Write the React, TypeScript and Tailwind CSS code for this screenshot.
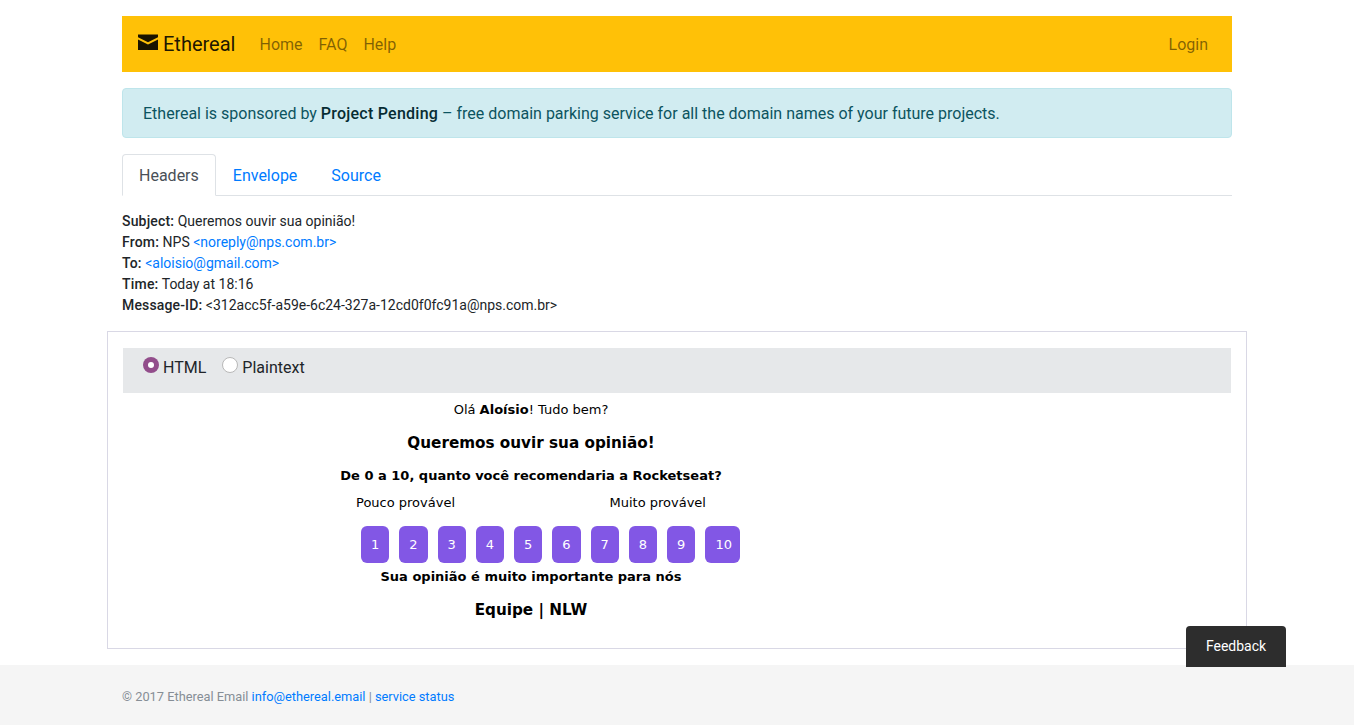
const navLinks = ['Home', 'FAQ', 'Help'];
const scores = ['1', '2', '3', '4', '5', '6', '7', '8', '9'];

function EnvelopeIcon() {
  return (
    <svg width="20" height="16" viewBox="0 0 20 16" className="mt-[-4px] mr-[5px]" fill="currentColor" aria-hidden="true">
      <path d="M0 .4v2.9l10 5 10-5V.4z" />
      <path d="M0 5.5V16h20V5.5l-10 5z" />
    </svg>
  );
}

function Navbar() {
  return (
    <nav className="flex h-14 items-center bg-[#ffc107] px-4">
      <a className="mr-4 flex items-center text-xl leading-[30px] text-black/90">
        <EnvelopeIcon />
        Ethereal
      </a>
      <div className="flex grow pt-0.5">
        {navLinks.map((label) => (
          <a key={label} className="px-2 text-black/50">{label}</a>
        ))}
      </div>
      <a className="px-2 pt-0.5 text-black/50">Login</a>
    </nav>
  );
}

function Tabs() {
  return (
    <div className="mt-4 flex h-[42px] border-b border-[#dee2e6]">
      <a className="h-[42px] rounded-t border border-[#dee2e6] border-b-white bg-white px-4 pt-[9px] text-[#495057]">Headers</a>
      <a className="border-x border-transparent px-4 pt-[10px] text-[#007bff]">Envelope</a>
      <a className="border-x border-transparent px-4 pt-[10px] text-[#007bff]">Source</a>
    </div>
  );
}

function MessageDetails() {
  return (
    <div className="mt-[15px] text-sm leading-[21px]">
      <div><b className="font-medium tracking-[0.17px]">Subject:</b> Queremos ouvir sua opinião!</div>
      <div><b className="font-medium tracking-[0.2px]">From:</b> NPS <a className="text-[#007bff]">&lt;noreply@nps.com.br&gt;</a></div>
      <div><b className="font-medium tracking-[0.17px]">To:</b> <a className="text-[#007bff]">&lt;aloisio@gmail.com&gt;</a></div>
      <div><b className="font-medium tracking-[0.2px]">Time:</b> Today at 18:16</div>
      <div><b className="font-medium tracking-[0.15px]">Message-ID:</b> &lt;312acc5f-a59e-6c24-327a-12cd0f0fc91a@nps.com.br&gt;</div>
    </div>
  );
}

function EmailBody() {
  return (
    <div className="ml-2 w-[800px] pt-[9px] text-center font-['DejaVu_Sans',sans-serif] text-[13px] leading-4 text-black">
      <p>Olá <b>Aloísio</b>! Tudo bem?</p>
      <h3 className="mt-4 text-[15.21px] leading-[18px] font-bold">Queremos ouvir sua opinião!</h3>
      <p className="mt-4 font-bold">De 0 a 10, quanto você recomendaria a Rocketseat?</p>
      <div className="mt-[11px] flex pl-[225px]">
        <span className="w-[253.5px] text-left">Pouco provável</span>
        <span>Muito provável</span>
      </div>
      <div className="mt-[15px] flex gap-[10px] pl-[230px] text-white">
        {scores.map((score) => (
          <a key={score} className="h-[37px] w-[28.27px] rounded-md bg-[#8257e5] leading-[37px]">{score}</a>
        ))}
        <a className="h-[37px] w-[35px] rounded-md bg-[#8257e5] pl-[10px] text-left leading-[37px]">10</a>
      </div>
      <p className="mt-[6px] font-bold">Sua opinião é muito importante para nós</p>
      <h3 className="mt-4 text-[15.21px] leading-[18px] font-bold">Equipe | NLW</h3>
    </div>
  );
}

function MessagePanel() {
  return (
    <div className="-mx-[15px] mt-[15px] h-[318px] border border-[#d9d8e5] px-[15px] pt-4">
      <div className="flex h-[45px] bg-[#e6e8ea] px-5 pt-2">
        <label className="mr-4 flex">
          <span className="mt-px mr-1 flex size-4 items-center justify-center rounded-full bg-[#924d8b]">
            <span className="size-1.5 rounded-full bg-white" />
          </span>
          HTML
        </label>
        <label className="flex">
          <span className="mt-px mr-1 size-4 rounded-full border border-[#b8b8b8] bg-white" />
          Plaintext
        </label>
      </div>
      <EmailBody />
    </div>
  );
}

export default function App() {
  return (
    <div className="relative h-[727px] overflow-hidden bg-white font-[Roboto,sans-serif] text-base leading-6 text-[#212529]">
      <main className="mx-auto w-[1110px] pt-4">
        <Navbar />
        <div className="mt-4 h-[50px] rounded border border-[#bee5eb] bg-[#d1ecf1] px-5 pt-[13px] text-[#0c5460]">
          Ethereal is sponsored by <a className="font-medium tracking-[0.24px] text-[#062c33]">Project Pending</a> – free domain parking service for all the domain names of your future projects.
        </div>
        <Tabs />
        <MessageDetails />
        <MessagePanel />
      </main>
      <footer className="mt-4 h-[60px] bg-[#f5f5f5]">
        <div className="mx-auto w-[1110px] text-[12.8px] leading-[64px] text-[#868e96]">
          © 2017 Ethereal Email <a className="text-[#007bff]">info@ethereal.email</a> | <a className="text-[#007bff]">service status</a>
        </div>
      </footer>
      <button className="absolute top-[626px] left-[1186px] h-[41px] w-[100px] rounded-t bg-[#2d2d2d] pb-0.5 text-sm text-white">Feedback</button>
    </div>
  );
}
